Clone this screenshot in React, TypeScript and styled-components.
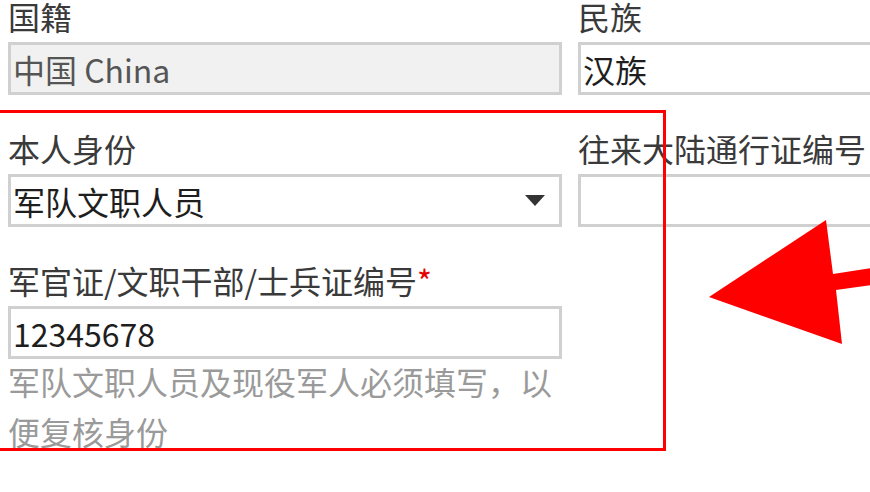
import React from 'react';
import styled, { createGlobalStyle } from 'styled-components';

const GlobalStyle = createGlobalStyle`
  html, body {
    margin: 0;
    padding: 0;
    background: #fff;
    overflow: hidden;
  }
  body {
    font-family: "Noto Sans CJK SC", "Noto Sans", sans-serif;
  }
`;

const Page = styled.div`
  position: relative;
  width: 870px;
  height: 492px;
  overflow: hidden;
  box-sizing: border-box;
  padding-left: 8px;
`;

const Grid = styled.div`
  display: grid;
  grid-template-columns: 554px 554px;
  column-gap: 16px;
  row-gap: 33px;
  margin-top: -4px;
`;

const Field = styled.div`
  display: flex;
  flex-direction: column;
`;

const Label = styled.label`
  font-size: 32px;
  line-height: 40px;
  color: #3a3a3a;
  margin-bottom: 6px;
  white-space: nowrap;
`;

const Required = styled.span`
  color: #e60000;
`;

const Input = styled.input<{ $disabled?: boolean }>`
  box-sizing: border-box;
  width: 100%;
  height: 53px;
  margin: 0;
  border: 3px solid #d0d0d0;
  padding: 0 2px;
  font-family: inherit;
  font-size: 32px;
  color: ${p => (p.$disabled ? '#555' : '#1e1e1e')};
  background: ${p => (p.$disabled ? '#f1f1f1' : '#fff')};
  outline: none;
`;

const Select = styled.div`
  box-sizing: border-box;
  height: 53px;
  border: 3px solid #d0d0d0;
  padding: 0 14px 0 2px;
  display: flex;
  align-items: center;
  justify-content: space-between;
  font-size: 32px;
  color: #1e1e1e;
  background: #fff;
`;

const Caret = styled.span`
  width: 0;
  height: 0;
  border-left: 10px solid transparent;
  border-right: 10px solid transparent;
  border-top: 11px solid #333;
`;

const Help = styled.div`
  margin-top: -3px;
  font-size: 32px;
  line-height: 50px;
  color: #9a9a9a;
`;

const Highlight = styled.div`
  position: absolute;
  left: -6px;
  top: 110px;
  width: 672px;
  height: 341px;
  box-sizing: border-box;
  border: 3px solid #ff0000;
  pointer-events: none;
`;

const Arrow = styled.svg`
  position: absolute;
  left: 0;
  top: 0;
  pointer-events: none;
`;

export default function App() {
  return (
    <Page>
      <GlobalStyle />
      <Grid>
        <Field>
          <Label>国籍</Label>
          <Input $disabled readOnly value="中国 China" />
        </Field>
        <Field>
          <Label>民族</Label>
          <Input readOnly value="汉族" />
        </Field>
        <Field>
          <Label>本人身份</Label>
          <Select>
            <span>军队文职人员</span>
            <Caret />
          </Select>
        </Field>
        <Field>
          <Label>往来大陆通行证编号</Label>
          <Input readOnly value="" />
        </Field>
        <Field>
          <Label>
            军官证/文职干部/士兵证编号<Required>*</Required>
          </Label>
          <Input readOnly value="12345678" />
          <Help>军队文职人员及现役军人必须填写，以便复核身份</Help>
        </Field>
      </Grid>
      <Highlight />
      <Arrow width="870" height="492" viewBox="0 0 870 492">
        <polygon
          points="709,297 826,220 833,274 872,268 872,285 836,290 842,344"
          fill="#ff0000"
        />
      </Arrow>
    </Page>
  );
}
